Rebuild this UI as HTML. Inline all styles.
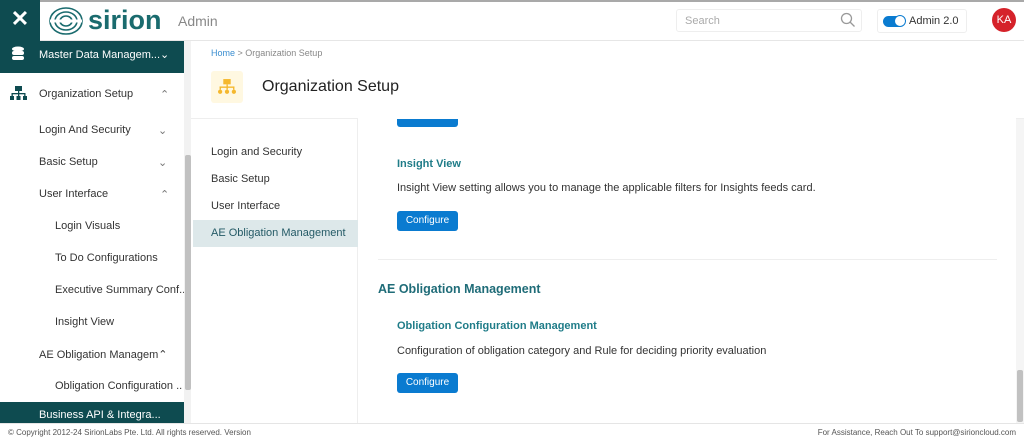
<!DOCTYPE html>
<html><head><meta charset="utf-8"><style>
*{box-sizing:border-box;margin:0;padding:0}
body{width:1024px;height:441px;overflow:hidden;font-family:"Liberation Sans",Arial,sans-serif;background:#fff;position:relative;color:#333}
.abs{position:absolute}
.top{left:0;top:0;width:1024px;height:41px;background:#fff;border-top:2px solid #a9a9a9;border-bottom:1px solid #e6e6e6}
.x{left:0;top:0;width:40px;height:41px;background:#0e4b50;color:#fff;font-size:22px;font-weight:bold;text-align:center;line-height:38px}
.side{left:0;top:41px;width:184px;height:382px;background:#fff}
.item{position:absolute;left:0;width:184px;font-size:11px;color:#333}
.item.dark{background:#0e4b50;color:#fff}
.scr{left:184px;top:41px;width:7px;height:382px;background:#f2f2f2}
.thumb{left:185px;top:155px;width:6px;height:235px;background:#c1c1c1;border-radius:2px}
.btn{position:absolute;background:#0a7bd0;color:#fff;font-size:10px;border-radius:3px;text-align:center;width:61px;height:20px;line-height:20px}
.foot{left:0;top:423px;width:1024px;height:18px;background:#fff;border-top:1px solid #e5e5e5;font-size:8px;color:#555;line-height:18px}
</style></head><body>
<div class="abs top"></div>
<div class="abs x">✕</div>
<svg class="abs" style="left:48px;top:6px" width="36" height="30" viewBox="0 0 36 30"><g fill="none" stroke="#1a6b6e" stroke-width="1.6"><ellipse cx="18" cy="15" rx="16" ry="13"/><ellipse cx="18" cy="15" rx="11" ry="9"/><ellipse cx="18" cy="15" rx="6" ry="5"/></g><path d="M2 15h32" stroke="#fff" stroke-width="3"/></svg>
<div class="abs" style="left:88px;top:5px;font-size:27px;font-weight:bold;color:#1a6b6e">sirion</div>
<div class="abs" style="left:178px;top:13px;font-size:14px;color:#888">Admin</div>
<div class="abs" style="left:676px;top:9px;width:186px;height:23px;border:1px solid #eee;border-radius:3px;font-size:11px;color:#aaa;padding:5px 8px">Search</div>
<svg class="abs" style="left:840px;top:12px" width="16" height="16" viewBox="0 0 16 16"><circle cx="6.5" cy="6.5" r="5" fill="none" stroke="#999" stroke-width="1.3"/><path d="M10 10l4.5 4.5" stroke="#999" stroke-width="1.3"/></svg>
<div class="abs" style="left:877px;top:9px;width:90px;height:24px;border:1px solid #eee;border-radius:3px"></div>
<div class="abs" style="left:883px;top:16px;width:21px;height:11px;border-radius:6px;background:#0a7bd0"></div>
<div class="abs" style="left:894px;top:15px;width:12px;height:12px;border-radius:6px;background:#fff;border:1px solid #0a7bd0"></div>
<div class="abs" style="left:909px;top:15px;font-size:11px;color:#333">Admin 2.0</div>
<div class="abs" style="left:992px;top:8px;width:24px;height:24px;border-radius:12px;background:#d5222a;color:#fff;font-size:11px;text-align:center;line-height:24px">KA</div>

<div class="abs side"></div>
<div class="item dark" style="top:41px;height:32px;line-height:28px;padding-left:39px;font-size:11px">Master Data Managem...⌄</div>
<svg class="abs" style="left:11px;top:46px" width="14" height="17" viewBox="0 0 14 17"><g fill="#fff"><ellipse cx="7" cy="3" rx="6" ry="2.5"/><rect x="1" y="5" width="12" height="4" rx="2"/><rect x="1" y="10" width="12" height="4" rx="2"/></g></svg>
<svg class="abs" style="left:10px;top:86px" width="17" height="15" viewBox="0 0 17 15"><g fill="#0e4b50"><rect x="5" y="0" width="7" height="5"/><rect x="0" y="10" width="4" height="4"/><rect x="6.5" y="10" width="4" height="4"/><rect x="13" y="10" width="4" height="4"/><rect x="8" y="5" width="1.3" height="5"/><rect x="1.5" y="7" width="14" height="1.3"/><rect x="1.5" y="7" width="1.3" height="3"/><rect x="14.2" y="7" width="1.3" height="3"/></g></svg>
<div class="item" style="top:88px;left:39px;width:140px">Organization Setup<span style="position:absolute;left:121px;color:#777">⌃</span></div>
<div class="item" style="top:124px;left:39px;width:140px">Login And Security<span style="position:absolute;left:119px;color:#777">⌄</span></div>
<div class="item" style="top:156px;left:39px;width:140px">Basic Setup<span style="position:absolute;left:119px;color:#777">⌄</span></div>
<div class="item" style="top:188px;left:39px;width:140px">User Interface<span style="position:absolute;left:121px;color:#777">⌃</span></div>
<div class="item" style="top:220px;left:55px">Login Visuals</div>
<div class="item" style="top:252px;left:55px">To Do Configurations</div>
<div class="item" style="top:284px;left:55px;width:130px;white-space:nowrap;overflow:hidden">Executive Summary Conf...</div>
<div class="item" style="top:316px;left:55px">Insight View</div>
<div class="item" style="top:348px;left:39px">AE Obligation Managem⌃</div>
<div class="item" style="top:380px;left:55px;white-space:nowrap">Obligation Configuration ..</div>
<div class="item dark" style="top:402px;height:21px;padding-left:39px;line-height:26px;overflow:hidden">Business API &amp; Integra...</div>
<div class="abs scr"></div><div class="abs thumb"></div>

<div class="abs" style="left:191px;top:41px;width:833px;height:78px;background:#fff;border-bottom:1px solid #eee"></div>
<div class="abs" style="left:211px;top:48px;font-size:9px;color:#888"><span style="color:#3b8ed0">Home</span> &gt; Organization Setup</div>
<div class="abs" style="left:211px;top:71px;width:32px;height:32px;background:#fff8e1;border-radius:3px"></div>
<svg class="abs" style="left:218px;top:78px" width="18" height="18" viewBox="0 0 17 15"><g fill="#f5b82e"><rect x="5" y="0" width="7" height="5"/><circle cx="2" cy="12" r="2"/><circle cx="8.5" cy="12" r="2"/><circle cx="15" cy="12" r="2"/><rect x="8" y="5" width="1.3" height="5"/><rect x="1.5" y="7" width="14" height="1.3"/><rect x="1.5" y="7" width="1.3" height="3"/><rect x="14.2" y="7" width="1.3" height="3"/></g></svg>
<div class="abs" style="left:262px;top:78px;font-size:16px;color:#222">Organization Setup</div>

<div class="abs" style="left:357px;top:119px;width:1px;height:304px;background:#eee"></div>
<div class="abs" style="left:211px;top:146px;font-size:11px">Login and Security</div>
<div class="abs" style="left:211px;top:173px;font-size:11px">Basic Setup</div>
<div class="abs" style="left:211px;top:200px;font-size:11px">User Interface</div>
<div class="abs" style="left:193px;top:220px;width:165px;height:27px;background:#dde8ea"></div>
<div class="abs" style="left:211px;top:227px;font-size:11px;color:#245a66">AE Obligation Management</div>

<div class="abs" style="left:397px;top:112px;width:61px;height:15px;background:#0a7bd0;border-radius:3px"></div>
<div class="abs" style="left:358px;top:100px;width:658px;height:19px;background:#fff"></div>
<div class="abs" style="left:397px;top:158px;font-size:11px;font-weight:bold;color:#1f7c88">Insight View</div>
<div class="abs" style="left:397px;top:182px;font-size:11px;color:#333">Insight View setting allows you to manage the applicable filters for Insights feeds card.</div>
<div class="btn" style="left:397px;top:211px">Configure</div>
<div class="abs" style="left:378px;top:259px;width:619px;height:1px;background:#eee"></div>
<div class="abs" style="left:378px;top:282px;font-size:12.5px;font-weight:bold;color:#1f6c78">AE Obligation Management</div>
<div class="abs" style="left:397px;top:320px;font-size:11px;font-weight:bold;color:#1f7c88">Obligation Configuration Management</div>
<div class="abs" style="left:397px;top:345px;font-size:11px;color:#333">Configuration of obligation category and Rule for deciding priority evaluation</div>
<div class="btn" style="left:397px;top:373px">Configure</div>
<div class="abs" style="left:1016px;top:119px;width:8px;height:304px;background:#f5f5f5"></div>
<div class="abs" style="left:1017px;top:370px;width:6px;height:52px;background:#c1c1c1;border-radius:2px"></div>

<div class="abs foot"><span style="position:absolute;left:8px">© Copyright 2012-24 SirionLabs Pte. Ltd. All rights reserved. Version</span><span style="position:absolute;right:8px">For Assistance, Reach Out To support@sirioncloud.com</span></div>
</body></html>
